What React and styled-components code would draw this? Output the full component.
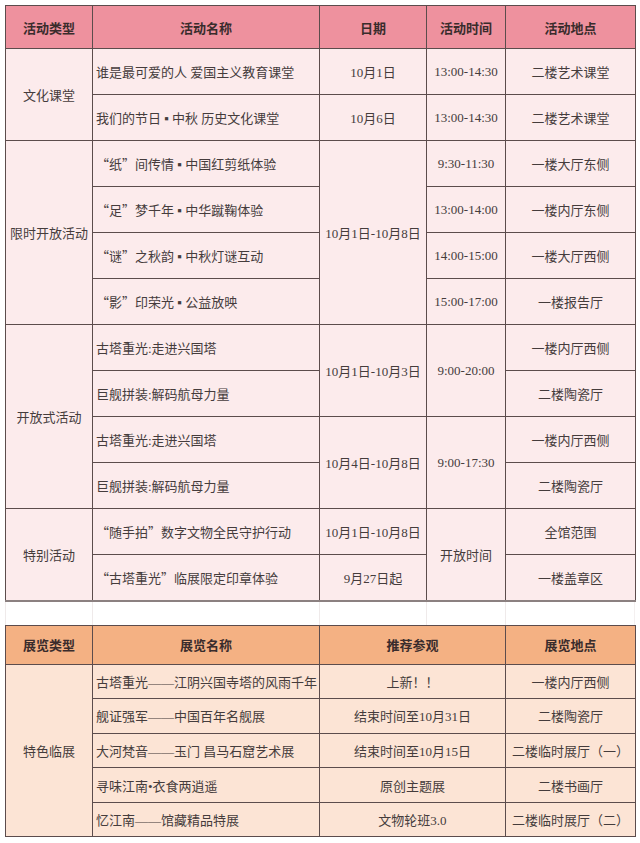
import React from "react";
import styled, { createGlobalStyle } from "styled-components";

const Global = createGlobalStyle`
  html, body { margin: 0; padding: 0; background: #ffffff; }
  body {
    font-family: "Liberation Serif", "Noto Sans CJK SC", serif;
    color: #453c3c;
  }
`;

const Page = styled.div`
  width: 640px;
  padding: 5px 5px 0 5px;
  box-sizing: border-box;
`;

const Table = styled.table`
  width: 630px;
  border-collapse: collapse;
  table-layout: fixed;
  font-size: 13px;
`;

const Th = styled.th`
  background: ${(p) => p.$bg};
  height: ${(p) => p.$h}px;
  border: 1px solid #5c4c4c;
  font-weight: 700;
  color: #3a2c2c;
  text-align: center;
  padding: 0;
  box-sizing: border-box;
`;

const Td = styled.td`
  background: ${(p) => p.$bg};
  height: ${(p) => p.$h}px;
  border: 1px solid #5c4c4c;
  border-bottom: ${(p) => (p.$last ? "2px solid #8b8080" : "1px solid #5c4c4c")};
  text-align: ${(p) => (p.$left ? "left" : "center")};
  padding: ${(p) => (p.$left ? "0 0 0 3px" : "0")};
  font-weight: 400;
  white-space: nowrap;
  box-sizing: border-box;
  color: #453c3c;
`;

const Quote = styled.span`
  font-family: "Noto Sans CJK SC", sans-serif;
`;

const Spacer = styled.div`
  display: grid;
  grid-template-columns: 87px 227px 107px 79px 130px;
  height: 23px;
  width: 630px;
`;

const SpacerCell = styled.div`
  border-left: 1px solid #efeaea;
  &:last-child { border-right: 1px solid #f4f0f0; }
`;

const PINK_H = "#ee919e";
const PINK_B = "#fcebec";
const ORG_H = "#f4b183";
const ORG_B = "#fce4d5";

const Col = styled.col`
  width: ${(p) => p.$w}px;
`;

const Q = ({ children }) => (
  <>
    <Quote>“</Quote>
    {children}
    <Quote>”</Quote>
  </>
);

export default function App() {
  const p = { $bg: PINK_B, $h: 46 };
  const o = { $bg: ORG_B, $h: 34.6 };
  return (
    <Page>
      <Global />
      <Table>
        <colgroup>
          <Col $w={87} />
          <Col $w={227} />
          <Col $w={107} />
          <Col $w={79} />
          <Col $w={130} />
        </colgroup>
        <thead>
          <tr>
            <Th $bg={PINK_H} $h={43}>活动类型</Th>
            <Th $bg={PINK_H} $h={43}>活动名称</Th>
            <Th $bg={PINK_H} $h={43}>日期</Th>
            <Th $bg={PINK_H} $h={43}>活动时间</Th>
            <Th $bg={PINK_H} $h={43}>活动地点</Th>
          </tr>
        </thead>
        <tbody>
          <tr>
            <Td {...p} rowSpan={2}>文化课堂</Td>
            <Td {...p} $left>谁是最可爱的人&nbsp;爱国主义教育课堂</Td>
            <Td {...p}>10月1日</Td>
            <Td {...p}>13:00-14:30</Td>
            <Td {...p}>二楼艺术课堂</Td>
          </tr>
          <tr>
            <Td {...p} $left>我们的节日 ▪ 中秋&nbsp;历史文化课堂</Td>
            <Td {...p}>10月6日</Td>
            <Td {...p}>13:00-14:30</Td>
            <Td {...p}>二楼艺术课堂</Td>
          </tr>
          <tr>
            <Td {...p} rowSpan={4}>限时开放活动</Td>
            <Td {...p} $left><Q>纸</Q>间传情 ▪ 中国红剪纸体验</Td>
            <Td {...p} rowSpan={4}>10月1日-10月8日</Td>
            <Td {...p}>9:30-11:30</Td>
            <Td {...p}>一楼大厅东侧</Td>
          </tr>
          <tr>
            <Td {...p} $left><Q>足</Q>梦千年 ▪ 中华蹴鞠体验</Td>
            <Td {...p}>13:00-14:00</Td>
            <Td {...p}>一楼内厅东侧</Td>
          </tr>
          <tr>
            <Td {...p} $left><Q>谜</Q>之秋韵 ▪ 中秋灯谜互动</Td>
            <Td {...p}>14:00-15:00</Td>
            <Td {...p}>一楼大厅西侧</Td>
          </tr>
          <tr>
            <Td {...p} $left><Q>影</Q>印荣光 ▪ 公益放映</Td>
            <Td {...p}>15:00-17:00</Td>
            <Td {...p}>一楼报告厅</Td>
          </tr>
          <tr>
            <Td {...p} rowSpan={4}>开放式活动</Td>
            <Td {...p} $left>古塔重光:走进兴国塔</Td>
            <Td {...p} rowSpan={2}>10月1日-10月3日</Td>
            <Td {...p} rowSpan={2}>9:00-20:00</Td>
            <Td {...p}>一楼内厅西侧</Td>
          </tr>
          <tr>
            <Td {...p} $left>巨舰拼装:解码航母力量</Td>
            <Td {...p}>二楼陶瓷厅</Td>
          </tr>
          <tr>
            <Td {...p} $left>古塔重光:走进兴国塔</Td>
            <Td {...p} rowSpan={2}>10月4日-10月8日</Td>
            <Td {...p} rowSpan={2}>9:00-17:30</Td>
            <Td {...p}>一楼内厅西侧</Td>
          </tr>
          <tr>
            <Td {...p} $left>巨舰拼装:解码航母力量</Td>
            <Td {...p}>二楼陶瓷厅</Td>
          </tr>
          <tr>
            <Td {...p} rowSpan={2} $last>特别活动</Td>
            <Td {...p} $left><Q>随手拍</Q>数字文物全民守护行动</Td>
            <Td {...p}>10月1日-10月8日</Td>
            <Td {...p} rowSpan={2} $last>开放时间</Td>
            <Td {...p}>全馆范围</Td>
          </tr>
          <tr>
            <Td {...p} $left $last><Q>古塔重光</Q>临展限定印章体验</Td>
            <Td {...p} $last>9月27日起</Td>
            <Td {...p} $last>一楼盖章区</Td>
          </tr>
        </tbody>
      </Table>
      <Spacer>
        <SpacerCell />
        <SpacerCell />
        <SpacerCell />
        <SpacerCell />
        <SpacerCell />
      </Spacer>
      <Table>
        <colgroup>
          <Col $w={87} />
          <Col $w={227} />
          <Col $w={186} />
          <Col $w={130} />
        </colgroup>
        <thead>
          <tr>
            <Th $bg={ORG_H} $h={39}>展览类型</Th>
            <Th $bg={ORG_H} $h={39}>展览名称</Th>
            <Th $bg={ORG_H} $h={39}>推荐参观</Th>
            <Th $bg={ORG_H} $h={39}>展览地点</Th>
          </tr>
        </thead>
        <tbody>
          <tr>
            <Td {...o} rowSpan={5}>特色临展</Td>
            <Td {...o} $left>古塔重光——江阴兴国寺塔的风雨千年</Td>
            <Td {...o}>上新！！</Td>
            <Td {...o}>一楼内厅西侧</Td>
          </tr>
          <tr>
            <Td {...o} $left>舰证强军——中国百年名舰展</Td>
            <Td {...o}>结束时间至10月31日</Td>
            <Td {...o}>二楼陶瓷厅</Td>
          </tr>
          <tr>
            <Td {...o} $left>大河梵音——玉门&nbsp;昌马石窟艺术展</Td>
            <Td {...o}>结束时间至10月15日</Td>
            <Td {...o}>二楼临时展厅（一）</Td>
          </tr>
          <tr>
            <Td {...o} $left>寻味江南•衣食两逍遥</Td>
            <Td {...o}>原创主题展</Td>
            <Td {...o}>二楼书画厅</Td>
          </tr>
          <tr>
            <Td {...o} $left>忆江南——馆藏精品特展</Td>
            <Td {...o}>文物轮班3.0</Td>
            <Td {...o}>二楼临时展厅（二）</Td>
          </tr>
        </tbody>
      </Table>
    </Page>
  );
}
